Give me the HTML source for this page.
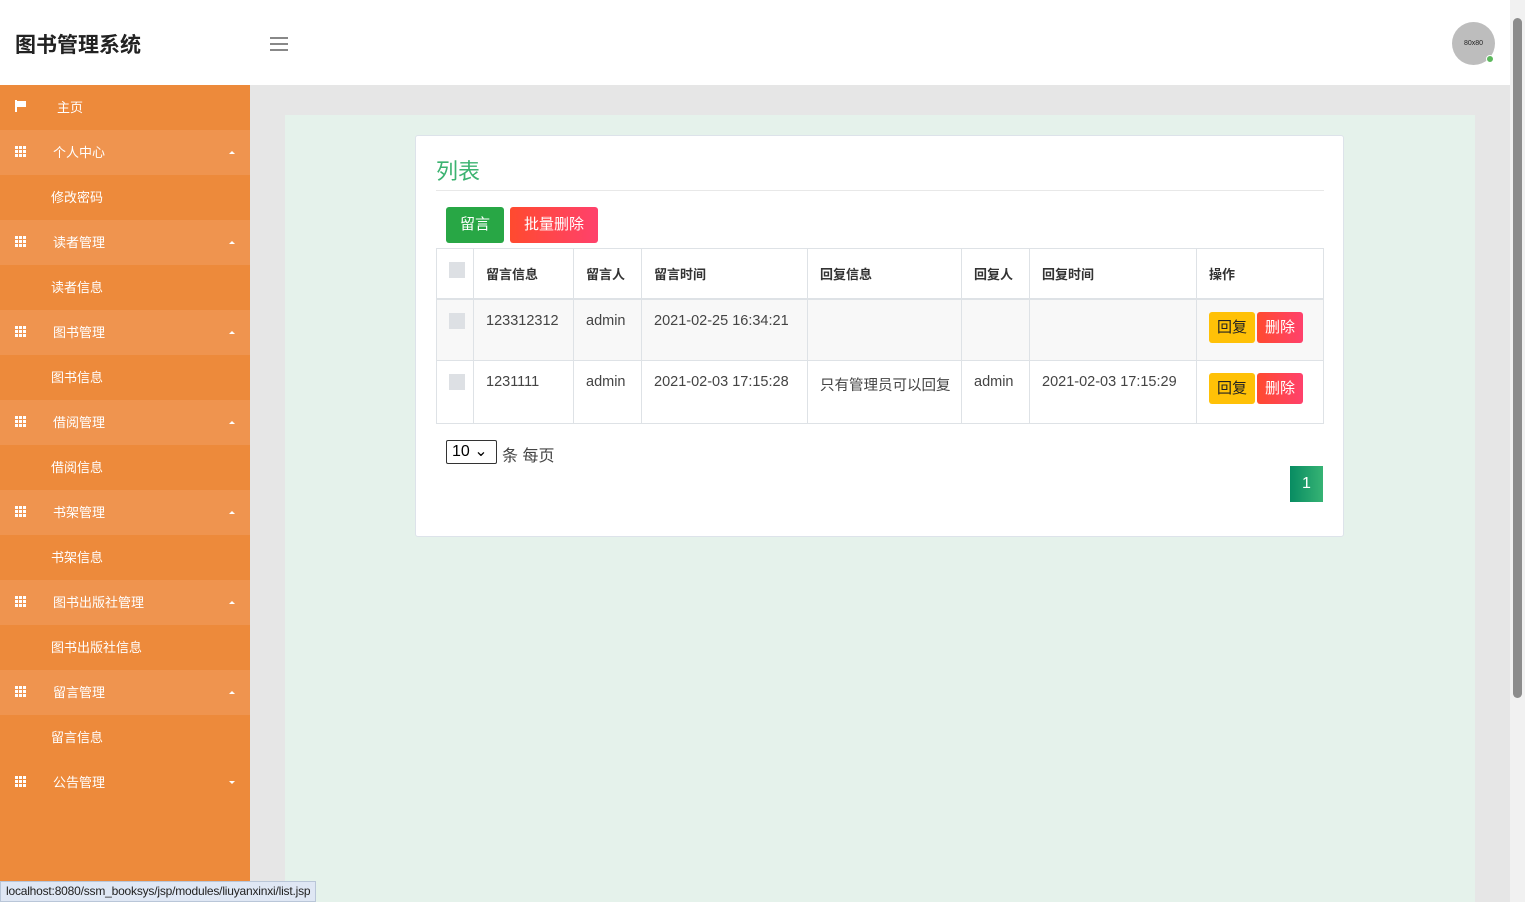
<!DOCTYPE html>
<html><head><meta charset="utf-8"><style>
*{box-sizing:border-box;margin:0;padding:0}
body{width:1525px;height:902px;overflow:hidden;font-family:"Liberation Sans","Noto Sans CJK SC",sans-serif;background:#e6e6e6;position:relative}
.top{position:absolute;left:0;top:0;width:1510px;height:85px;background:#fff}
.logo{position:absolute;left:15px;top:29px;font-size:21px;font-weight:bold;color:#222}
.ham{position:absolute;left:270px;top:37px;width:18px}
.ham i{display:block;height:2px;background:#888;margin-bottom:4px}
.av{position:absolute;left:1452px;top:22px;width:43px;height:43px;border-radius:50%;background:#bdbdbd;font-size:7px;line-height:43px;text-align:center;color:#222}
.dot{position:absolute;left:1486px;top:55px;width:8px;height:8px;border-radius:50%;background:#5cb85c;border:1px solid #fff}
.side{position:absolute;left:0;top:85px;width:250px;height:817px;background:#ed8a3b}
.it{height:45px;line-height:45px;color:#fff;font-size:13px;position:relative}
.it.h{background:#ef944f}
.grid{position:absolute;left:15px;top:16px;display:grid;grid-template-columns:3px 3px 3px;gap:1px}
.grid b{width:3px;height:3px;background:#fff}
.it span{position:absolute;left:53px}
.it.s span{left:51px}
.car{position:absolute;right:15px;top:21px;width:0;height:0;border-left:3px solid transparent;border-right:3px solid transparent;border-bottom:3px solid #fff}
.car.d{border-bottom:0;border-top:3px solid #fff}
.mint{position:absolute;left:285px;top:115px;width:1190px;height:787px;background:#e5f2eb}
.card{position:absolute;left:415px;top:135px;width:929px;height:402px;background:#fff;border:1px solid #dde3ea;border-radius:3px}
.title{position:absolute;left:20px;top:18px;font-size:22px;color:#3cb371}
.hr{position:absolute;left:20px;top:54px;width:888px;height:1px;background:#e8e8e8}
.btn{position:absolute;top:71px;height:36px;line-height:36px;color:#fff;font-size:15px;text-align:center;border-radius:3px}
table{position:absolute;left:20px;top:112px;border-collapse:collapse;width:888px;font-size:14.5px;color:#444}
td,th{border:1px solid #dee2e6;vertical-align:top;text-align:left;padding-left:12px}
th{height:50px;vertical-align:middle;font-size:13px;color:#333;border-bottom:2px solid #dee2e6}
.cb{display:inline-block;width:16px;height:16px;background:#dde0e4}
tr.r1 td{background:#f8f8f8;height:62px;padding-top:13px}
tr.r2 td{height:63px;padding-top:13px}
.b2{display:inline-block;height:31px;line-height:31px;padding:0 8px;font-size:15px;border-radius:3px;margin-top:-1px}
.sel{position:absolute;left:30px;top:304px;width:51px;height:24px;border:1px solid #333;border-radius:2px;font-size:16px;padding-left:5px;line-height:22px;color:#000}
.pg{position:absolute;left:874px;top:330px;width:33px;height:36px;background:linear-gradient(90deg,#088c62,#36b374);color:#fff;text-align:center;line-height:36px;font-size:16px}
.sb{position:absolute;left:1510px;top:0;width:15px;height:902px;background:#f1f1f1}
.stat{position:absolute;left:0;top:881px;height:21px;padding:0 5px;background:#dfe7f4;border:1px solid #b9c6d8;font-size:12px;line-height:19px;color:#222;letter-spacing:-0.2px}
</style></head><body>
<div class="top"><div class="logo">图书管理系统</div><div class="ham"><i></i><i></i><i></i></div>
<div class="av">80x80</div><div class="dot"></div></div>
<div class="side">
<div class="it"><svg style="position:absolute;left:15px;top:15px" width="12" height="12"><rect x="0" y="0" width="2" height="12" fill="#fff"/><path d="M2 1h9v6H2z" fill="#fff"/></svg><span style="left:57px">主页</span></div>
<div class="it h"><div class="grid"><b></b><b></b><b></b><b></b><b></b><b></b><b></b><b></b><b></b></div><span>个人中心</span><i class="car"></i></div>
<div class="it s"><span>修改密码</span></div>
<div class="it h"><div class="grid"><b></b><b></b><b></b><b></b><b></b><b></b><b></b><b></b><b></b></div><span>读者管理</span><i class="car"></i></div>
<div class="it s"><span>读者信息</span></div>
<div class="it h"><div class="grid"><b></b><b></b><b></b><b></b><b></b><b></b><b></b><b></b><b></b></div><span>图书管理</span><i class="car"></i></div>
<div class="it s"><span>图书信息</span></div>
<div class="it h"><div class="grid"><b></b><b></b><b></b><b></b><b></b><b></b><b></b><b></b><b></b></div><span>借阅管理</span><i class="car"></i></div>
<div class="it s"><span>借阅信息</span></div>
<div class="it h"><div class="grid"><b></b><b></b><b></b><b></b><b></b><b></b><b></b><b></b><b></b></div><span>书架管理</span><i class="car"></i></div>
<div class="it s"><span>书架信息</span></div>
<div class="it h"><div class="grid"><b></b><b></b><b></b><b></b><b></b><b></b><b></b><b></b><b></b></div><span>图书出版社管理</span><i class="car"></i></div>
<div class="it s"><span>图书出版社信息</span></div>
<div class="it h"><div class="grid"><b></b><b></b><b></b><b></b><b></b><b></b><b></b><b></b><b></b></div><span>留言管理</span><i class="car"></i></div>
<div class="it s"><span>留言信息</span></div>
<div class="it"><div class="grid"><b></b><b></b><b></b><b></b><b></b><b></b><b></b><b></b><b></b></div><span>公告管理</span><i class="car d"></i></div>
</div>
<div class="mint"></div>
<div class="card">
<div class="title">列表</div><div class="hr"></div>
<div class="btn" style="left:30px;width:58px;background:#28a745">留言</div>
<div class="btn" style="left:94px;width:88px;background:linear-gradient(90deg,#ff4a2f,#ff416c)">批量删除</div>
<table>
<tr><th style="width:37px"><span class="cb" style="margin-top:-6px"></span></th><th style="width:100px">留言信息</th><th style="width:68px">留言人</th><th style="width:166px">留言时间</th><th style="width:154px">回复信息</th><th style="width:68px">回复人</th><th style="width:167px">回复时间</th><th>操作</th></tr>
<tr class="r1"><td><span class="cb"></span></td><td>123312312</td><td>admin</td><td>2021-02-25 16:34:21</td><td></td><td></td><td></td><td><span class="b2" style="background:#ffc107;color:#222">回复</span><span class="b2" style="background:linear-gradient(90deg,#ff4a2f,#ff416c);color:#fff;margin-left:2px">删除</span></td></tr>
<tr class="r2"><td><span class="cb"></span></td><td>1231111</td><td>admin</td><td>2021-02-03 17:15:28</td><td>只有管理员可以回复</td><td>admin</td><td>2021-02-03 17:15:29</td><td><span class="b2" style="background:#ffc107;color:#222">回复</span><span class="b2" style="background:linear-gradient(90deg,#ff4a2f,#ff416c);color:#fff;margin-left:2px">删除</span></td></tr>
</table>
<div class="sel">10 ⌄</div><div style="position:absolute;left:86px;top:306px;font-size:16px;color:#444">条 每页</div>
<div class="pg">1</div>
</div>
<div class="sb"><div style="position:absolute;left:3px;top:18px;width:9px;height:680px;background:#8c8c8c;border-radius:5px"></div></div>
<div class="stat">localhost:8080/ssm_booksys/jsp/modules/liuyanxinxi/list.jsp</div>
</body></html>
